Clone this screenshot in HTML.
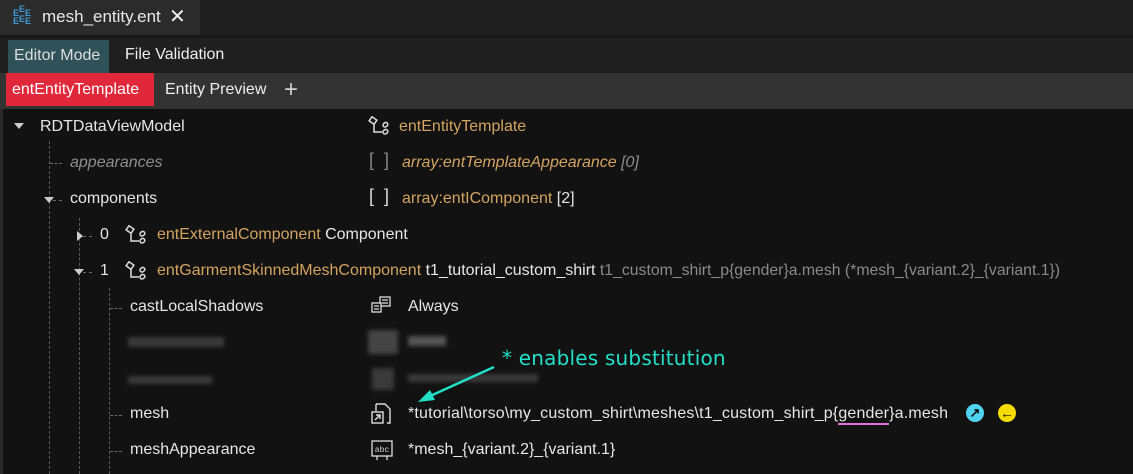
<!DOCTYPE html>
<html><head><meta charset="utf-8"><style>
*{margin:0;padding:0;box-sizing:border-box}
body{width:1133px;height:474px;background:#121212;font-family:"Liberation Sans",sans-serif;font-size:16px;color:#e6e6e6;position:relative;overflow:hidden}
.a{position:absolute;white-space:nowrap}
.o{color:#d4a35f}
.g{color:#8e8e8e;font-style:italic}
.dv{position:absolute;border-left:1px dashed #5a5a5a;width:0}
.dh{position:absolute;border-top:1px dashed #6a6a6a;height:0;width:12px}
.blur{position:absolute;background:#3a3a3a;filter:blur(2px)}
</style></head><body>
<div class="a" style="left:0;top:0;width:1133px;height:35px;background:#1f1f1f"></div>
<div class="a" style="left:0;top:0;width:200px;height:35px;background:#2b2b2b"></div>
<div class="a" style="left:0;top:35px;width:1133px;height:3px;background:#181818"></div>
<div class="a" style="left:0;top:38px;width:1133px;height:35px;background:#1f1f1f"></div>
<div class="a" style="left:0;top:73px;width:1133px;height:36px;background:#333"></div>
<div class="a" style="left:0;top:109px;width:3px;height:365px;background:#2a2a2a"></div>
<!-- tab -->
<div class="a" style="left:13px;top:5px;color:#3d9ad8;font-size:9px;line-height:8px;font-weight:bold">E<sup style="font-size:9px">E</sup>E<br>E<span style="position:relative;top:-2px">E</span>E</div>
<div class="a" style="left:42px;top:7px;font-size:17px;color:#e8e8e8">mesh_entity.ent</div>
<div class="a" style="left:169px;top:4px;font-size:20px;color:#eee">✕</div>
<!-- mode -->
<div class="a" style="left:8px;top:40px;width:101px;height:33px;background:#2f5258"></div>
<div class="a" style="left:14px;top:47px;font-size:16px;color:#ddd">Editor Mode</div>
<div class="a" style="left:125px;top:46px;font-size:16px;color:#eee">File Validation</div>
<div class="a" style="left:6px;top:73px;width:148px;height:33px;background:#e0283a"></div>
<div class="a" style="left:12px;top:81px;font-size:16px;color:#fff">entEntityTemplate</div>
<div class="a" style="left:165px;top:81px;font-size:16px;color:#eee">Entity Preview</div>
<div class="a" style="left:284px;top:76px;font-size:24px;color:#ccc;font-weight:200">+</div>
<!-- tree lines -->
<div class="dv" style="left:49px;top:141px;height:333px"></div>
<div class="dv" style="left:79px;top:218px;height:256px"></div>
<div class="dv" style="left:109px;top:288px;height:186px"></div>
<div class="dh" style="left:50px;top:163px"></div>
<div class="dh" style="left:53px;top:200px;width:9px"></div>
<div class="dh" style="left:83px;top:236px;width:9px"></div>
<div class="dh" style="left:83px;top:272px;width:9px"></div>
<div class="dh" style="left:110px;top:308px"></div>
<div class="dh" style="left:110px;top:415px"></div>
<div class="dh" style="left:110px;top:451px"></div>
<!-- arrows -->
<div class="a" style="left:14px;top:123px;width:0;height:0;border-left:5px solid transparent;border-right:5px solid transparent;border-top:6px solid #ccc"></div>
<div class="a" style="left:44px;top:197px;width:0;height:0;border-left:5px solid transparent;border-right:5px solid transparent;border-top:6px solid #ccc"></div>
<div class="a" style="left:77px;top:231px;width:0;height:0;border-top:5px solid transparent;border-bottom:5px solid transparent;border-left:6px solid #ccc"></div>
<div class="a" style="left:74px;top:269px;width:0;height:0;border-left:5px solid transparent;border-right:5px solid transparent;border-top:6px solid #ccc"></div>
<!-- rows -->
<div class="a" style="left:40px;top:118px">RDTDataViewModel</div>
<div class="a g" style="left:70px;top:154px">appearances</div>
<div class="a" style="left:70px;top:190px">components</div>
<div class="a" style="left:100px;top:226px">0</div>
<div class="a" style="left:100px;top:262px">1</div>
<svg class="a" style="left:125px;top:225px" width="24" height="22" viewBox="0 0 24 22" fill="none" stroke="#ddd" stroke-width="1.5"><rect x="2" y="2" width="6" height="5" transform="rotate(35 5 4.5)"/><path d="M6 8v8h8"/><rect x="15" y="7" width="5" height="4" rx="2" transform="rotate(-35 17 9)"/><rect x="15" y="14" width="5" height="4" rx="2" transform="rotate(-35 17 16)"/></svg>
<svg class="a" style="left:125px;top:261px" width="24" height="22" viewBox="0 0 24 22" fill="none" stroke="#ddd" stroke-width="1.5"><rect x="2" y="2" width="6" height="5" transform="rotate(35 5 4.5)"/><path d="M6 8v8h8"/><rect x="15" y="7" width="5" height="4" rx="2" transform="rotate(-35 17 9)"/><rect x="15" y="14" width="5" height="4" rx="2" transform="rotate(-35 17 16)"/></svg>
<svg class="a" style="left:368px;top:116px" width="24" height="22" viewBox="0 0 24 22" fill="none" stroke="#ddd" stroke-width="1.5"><rect x="2" y="2" width="6" height="5" transform="rotate(35 5 4.5)"/><path d="M6 8v8h8"/><rect x="15" y="7" width="5" height="4" rx="2" transform="rotate(-35 17 9)"/><rect x="15" y="14" width="5" height="4" rx="2" transform="rotate(-35 17 16)"/></svg>
<div class="a" style="left:157px;top:226px"><span class="o">entExternalComponent</span> Component</div>
<div class="a" style="left:157px;top:262px"><span class="o">entGarmentSkinnedMeshComponent</span> t1_tutorial_custom_shirt <span style="color:#8a8a8a;font-size:15.8px">t1_custom_shirt_p{gender}a.mesh (*mesh_{variant.2}_{variant.1})</span></div>
<div class="a o" style="left:399px;top:118px">entEntityTemplate</div>
<div class="a" style="left:369px;top:150px;color:#888;font-size:18px;font-weight:200">[&nbsp;&nbsp;]</div>
<div class="a" style="left:402px;top:154px"><span class="o" style="font-style:italic">array:entTemplateAppearance</span> <span class="g">[0]</span></div>
<div class="a" style="left:369px;top:186px;color:#ddd;font-size:18px;font-weight:200">[&nbsp;&nbsp;]</div>
<div class="a" style="left:402px;top:190px"><span class="o">array:entIComponent</span> [2]</div>
<div class="a" style="left:130px;top:298px">castLocalShadows</div>
<div class="a" style="left:130px;top:405px">mesh</div>
<div class="a" style="left:130px;top:441px">meshAppearance</div>
<!-- value icons -->
<svg class="a" style="left:370px;top:296px" width="24" height="20" viewBox="0 0 24 20" fill="none" stroke="#ddd" stroke-width="1.3"><rect x="10" y="1" width="10" height="9"/><path d="M12 4h6M12 7h6"/><rect x="2" y="7" width="9" height="9" fill="#121212"/><path d="M4 10h5M4 13h5"/></svg>
<svg class="a" style="left:371px;top:401px" width="22" height="26" viewBox="0 0 22 26" fill="none" stroke="#ddd" stroke-width="1.4"><path d="M5 3h9l5 5v14h-3M5 3v7"/><rect x="1" y="11" width="11" height="11"/><path d="M4 19l5-5M5 14h4v4"/></svg>
<svg class="a" style="left:371px;top:439px" width="22" height="24" viewBox="0 0 22 24" fill="none" stroke="#ddd" stroke-width="1.3"><rect x="1" y="2" width="20" height="15"/><text x="11" y="13" font-size="8" fill="#ddd" stroke="none" text-anchor="middle" font-family="Liberation Mono">abc</text><path d="M6 17v4M16 17v4"/></svg>
<div class="a" style="left:408px;top:298px">Always</div>
<div class="a" style="left:408px;top:405px;letter-spacing:0.17px">*tutorial\torso\my_custom_shirt\meshes\t1_custom_shirt_p{<span style="border-bottom:2px solid #e070e0;padding-bottom:1px">gender</span>}a.mesh</div>
<div class="a" style="left:408px;top:441px">*mesh_{variant.2}_{variant.1}</div>
<div class="a" style="left:966px;top:404px;width:18px;height:18px;border-radius:50%;background:#4fd4f0;color:#111;font-size:13px;line-height:18px;text-align:center;font-weight:bold">↗</div>
<div class="a" style="left:998px;top:404px;width:18px;height:18px;border-radius:50%;background:#f5dc00;color:#111;font-size:14px;line-height:18px;text-align:center;font-weight:bold">←</div>
<!-- blurred -->
<div class="blur" style="left:128px;top:337px;width:96px;height:10px"></div>
<div class="blur" style="left:128px;top:376px;width:84px;height:8px"></div>
<div class="blur" style="left:368px;top:330px;width:30px;height:24px;background:#444"></div>
<div class="blur" style="left:408px;top:336px;width:38px;height:10px;background:#555"></div>
<div class="blur" style="left:372px;top:368px;width:22px;height:22px;background:#3a3a3a"></div>
<div class="blur" style="left:408px;top:374px;width:130px;height:8px"></div>
<!-- annotation -->
<div class="a" style="left:502px;top:346px;color:#22e0c8;font-size:20px;font-family:'DejaVu Sans',sans-serif;letter-spacing:0.2px">* enables substitution</div>
<svg class="a" style="left:410px;top:355px" width="90" height="50"><line x1="84" y1="12" x2="18" y2="42" stroke="#22e0c8" stroke-width="2.5"/><polygon points="8,47 20,35 25,45" fill="#22e0c8"/></svg>
</body></html>
